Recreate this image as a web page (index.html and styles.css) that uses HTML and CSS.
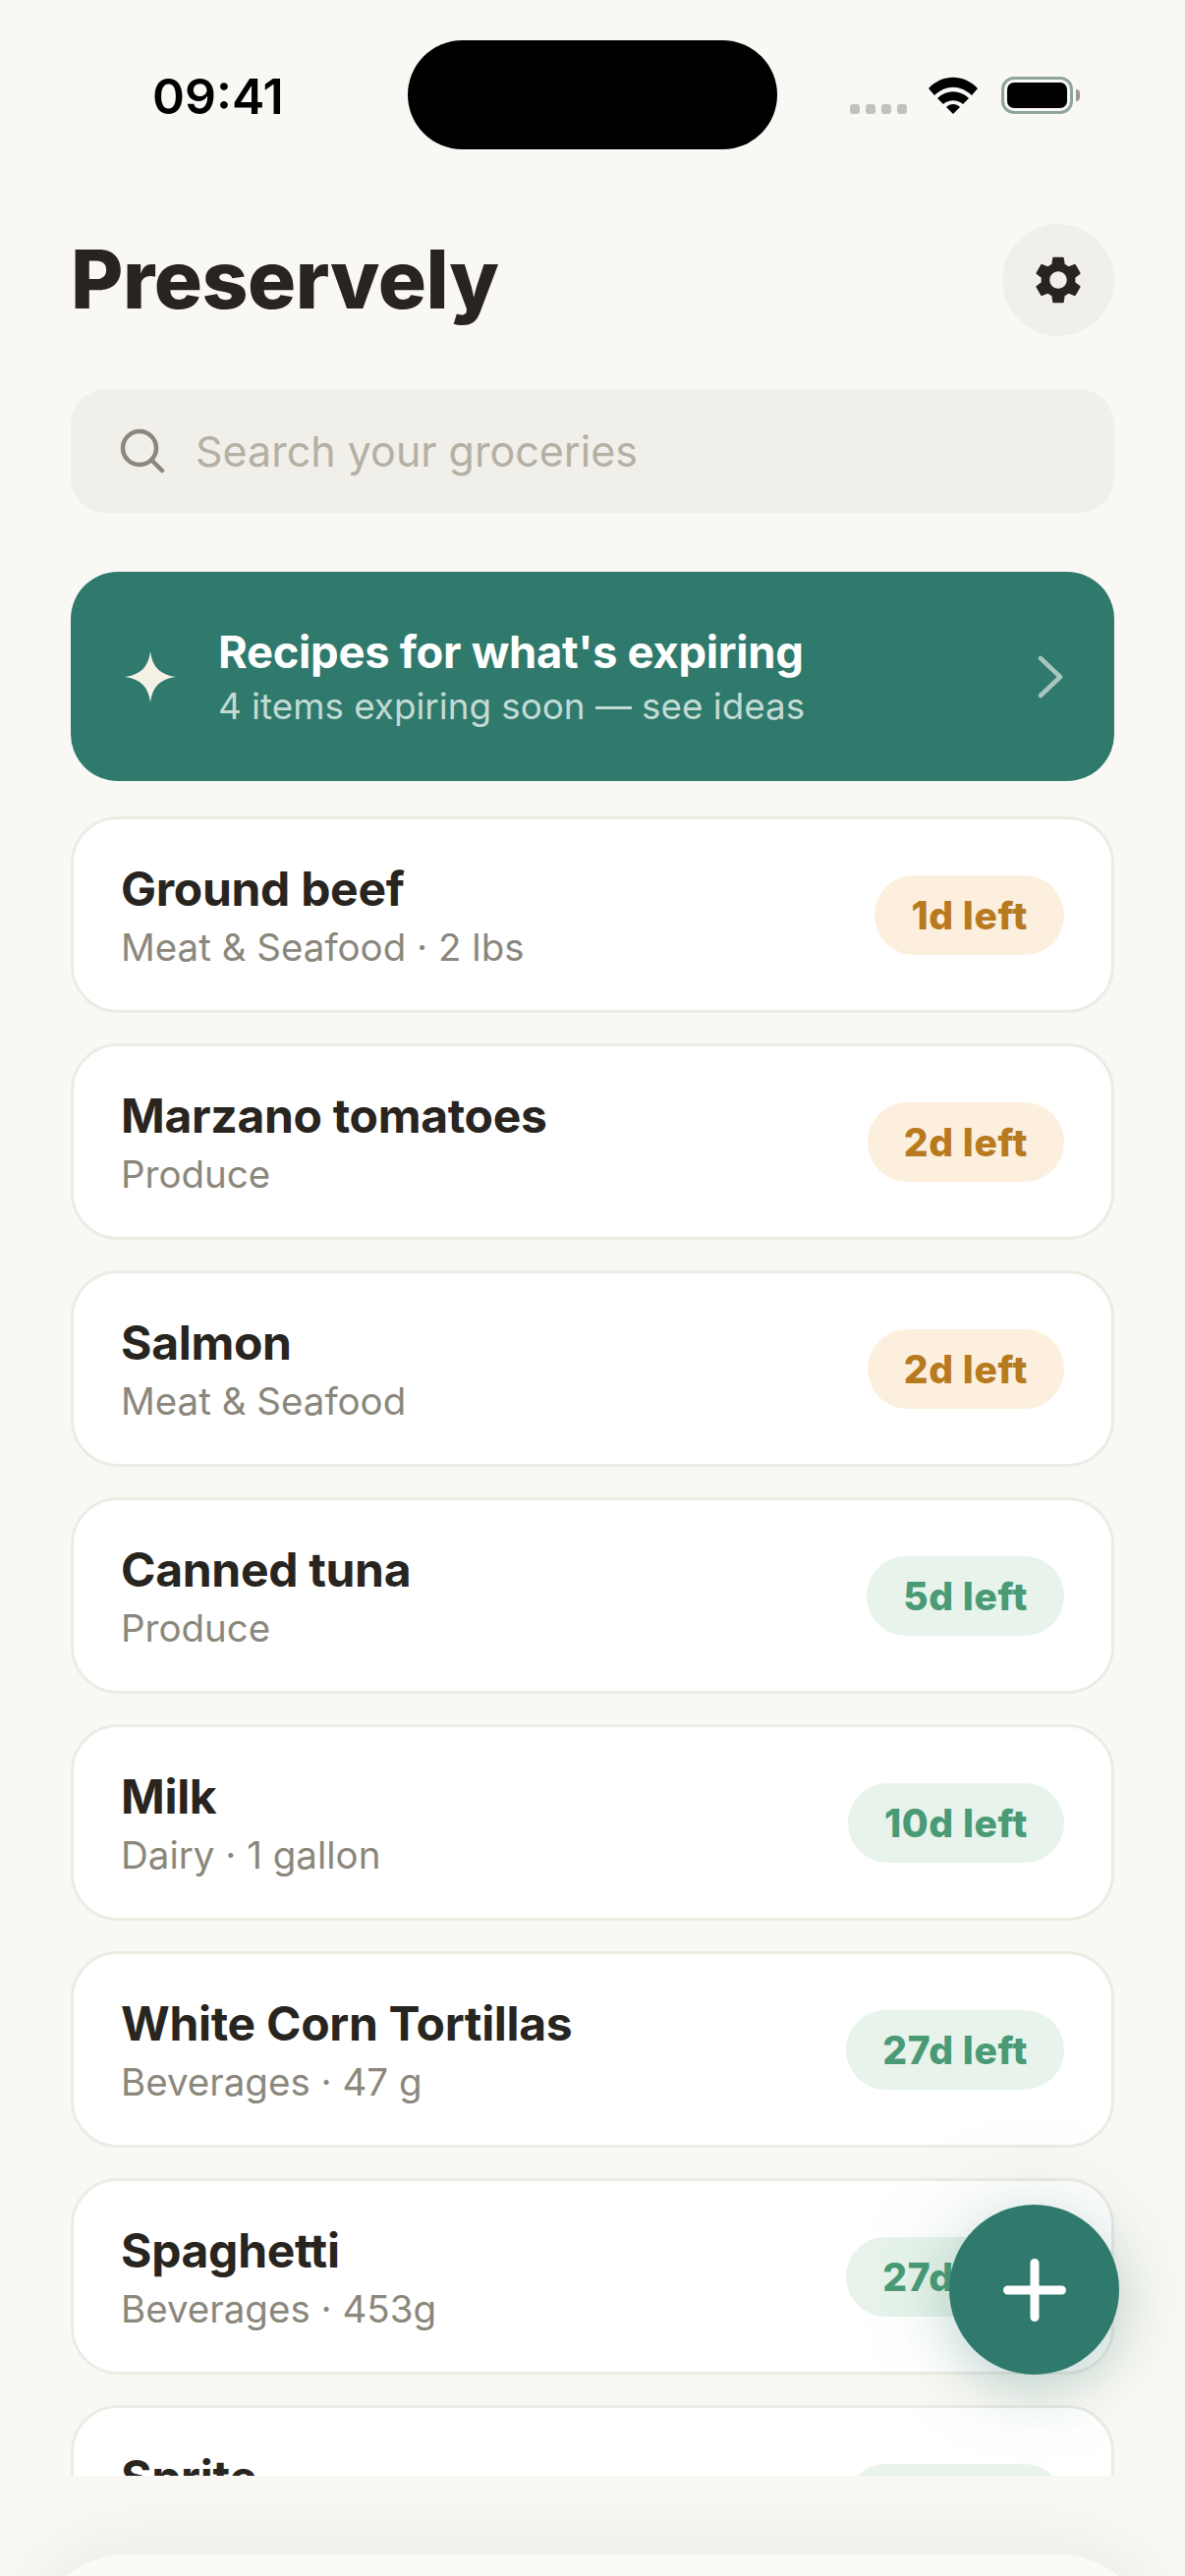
FILE: index.html
```html
<!DOCTYPE html>
<html lang="en">
<head>
  <meta charset="UTF-8">
  <title>Preservely</title>
  <link rel="stylesheet" href="styles.css">
</head>
<body>
  <div class="app">

    <div class="status-bar">
      <span class="time">09:41</span>
      <div class="island"></div>
      <div class="status-icons">
        <div class="signal"><i></i><i></i><i></i><i></i></div>
        <svg class="wifi" viewBox="0 0 50 38">
          <path d="M0 12 C14 -3 36 -3 50 12 L44 19 C32 8 18 8 6 19 Z" fill="#000"/>
          <path d="M9 22 C18 13 32 13 41 22 L35 28 C29 23 21 23 15 28 Z" fill="#000"/>
          <path d="M18 31 C22 27 28 27 32 31 L25 38 Z" fill="#000"/>
        </svg>
        <div class="battery"><div class="battery-level"></div></div>
        <div class="battery-tip"></div>
      </div>
    </div>

    <div class="header">
      <h1>Preservely</h1>
      <div class="settings">
        <svg viewBox="0 0 24 24" width="58" height="58">
          <path fill="#282521" d="M19.14 12.94c.04-.3.06-.61.06-.94 0-.32-.02-.64-.07-.94l2.03-1.58c.18-.14.23-.41.12-.61l-1.92-3.32c-.12-.22-.37-.29-.59-.22l-2.39.96c-.5-.38-1.03-.7-1.62-.94l-.36-2.54c-.04-.24-.24-.41-.48-.41h-3.84c-.24 0-.43.17-.47.41l-.36 2.54c-.59.24-1.13.57-1.62.94l-2.39-.96c-.22-.08-.47 0-.59.22L2.74 8.87c-.12.21-.08.47.12.61l2.03 1.58c-.05.3-.09.63-.09.94s.02.64.07.94l-2.03 1.58c-.18.14-.23.41-.12.61l1.92 3.32c.12.22.37.29.59.22l2.39-.96c.5.38 1.03.7 1.62.94l.36 2.54c.05.24.24.41.48.41h3.84c.24 0 .44-.17.47-.41l.36-2.54c.59-.24 1.13-.56 1.62-.94l2.39.96c.22.08.47 0 .59-.22l1.92-3.32c.12-.22.07-.47-.12-.61l-2.01-1.58zM12 15.6c-1.98 0-3.6-1.62-3.6-3.6s1.62-3.6 3.6-3.6 3.6 1.62 3.6 3.6-1.62 3.6-3.6 3.6z"/>
        </svg>
      </div>
    </div>

    <div class="search">
      <svg viewBox="0 0 46 46" width="46" height="46">
        <circle cx="20" cy="20" r="17" fill="none" stroke="#8b877c" stroke-width="4.5"/>
        <path d="M32.5 32.5 L43 43" stroke="#8b877c" stroke-width="4.5" stroke-linecap="round"/>
      </svg>
      <span>Search your groceries</span>
    </div>

    <div class="banner">
      <svg class="sparkle" viewBox="0 0 52 52" width="52" height="52">
        <path fill="#f6f1e7" d="M26 0 C28 16 36 24 52 26 C36 28 28 36 26 52 C24 36 16 28 0 26 C16 24 24 16 26 0 Z"/>
      </svg>
      <div class="banner-text">
        <div class="banner-title">Recipes for what's expiring</div>
        <div class="banner-sub">4 items expiring soon — see ideas</div>
      </div>
      <svg class="chevron" viewBox="0 0 26 44" width="26" height="44">
        <path d="M3 3 L23 22 L3 41" fill="none" stroke="#a9c6be" stroke-width="4.5" stroke-linecap="round" stroke-linejoin="round"/>
      </svg>
    </div>

    <div class="lista">
      <div class="item">
        <div>
          <div class="item-name">Ground beef</div>
          <div class="item-sub">Meat &amp; Seafood · 2 lbs</div>
        </div>
        <span class="badge soon">1d left</span>
      </div>
      <div class="item">
        <div>
          <div class="item-name">Marzano tomatoes</div>
          <div class="item-sub">Produce</div>
        </div>
        <span class="badge soon">2d left</span>
      </div>
      <div class="item">
        <div>
          <div class="item-name">Salmon</div>
          <div class="item-sub">Meat &amp; Seafood</div>
        </div>
        <span class="badge soon">2d left</span>
      </div>
      <div class="item">
        <div>
          <div class="item-name">Canned tuna</div>
          <div class="item-sub">Produce</div>
        </div>
        <span class="badge fresh">5d left</span>
      </div>
      <div class="item">
        <div>
          <div class="item-name">Milk</div>
          <div class="item-sub">Dairy · 1 gallon</div>
        </div>
        <span class="badge fresh">10d left</span>
      </div>
      <div class="item">
        <div>
          <div class="item-name">White Corn Tortillas</div>
          <div class="item-sub">Beverages · 47 g</div>
        </div>
        <span class="badge fresh">27d left</span>
      </div>
      <div class="item">
        <div>
          <div class="item-name">Spaghetti</div>
          <div class="item-sub">Beverages · 453g</div>
        </div>
        <span class="badge fresh">27d left</span>
      </div>
      <div class="item">
        <div>
          <div class="item-name">Sprite</div>
          <div class="item-sub">Beverages</div>
        </div>
        <span class="badge fresh">27d left</span>
      </div>
    </div>

    <div class="bottom">
      <div class="bottom-sheet"></div>
    </div>

    <div class="fab">
      <svg viewBox="0 0 64 64" width="64" height="64">
        <path d="M32 4.5 V59.5 M4.5 32 H59.5" stroke="#fff" stroke-width="9" stroke-linecap="round"/>
      </svg>
    </div>

  </div>
</body>
</html>
```

FILE: styles.css
```css
* {
  box-sizing: border-box;
}

body {
  margin: 0;
  background-color: #f9f8f4;
  font-family: Inter, sans-serif;
  color: #282521;
}

.app {
  position: relative;
  width: 1206px;
  height: 2622px;
  overflow: hidden;
  display: flex;
  flex-direction: column;
}

/* Status bar */
.status-bar {
  height: 228px;
  flex: none;
  display: flex;
  align-items: flex-start;
  padding: 41px 0 0 155px;
}

.time {
  width: 260px;
  margin-top: 33px;
  font-size: 50px;
  line-height: 49px;
  font-weight: 600;
  color: #000;
}

.island {
  width: 376px;
  height: 111px;
  border-radius: 56px;
  background-color: #000;
}

.status-icons {
  margin: 37px 0 0 74px;
  display: flex;
  align-items: flex-end;
  height: 38px;
}

.signal {
  display: flex;
  gap: 6px;
  margin-right: 22px;
}

.signal i {
  width: 10px;
  height: 10px;
  border-radius: 3px;
  background-color: #c0c3bd;
}

.wifi {
  width: 50px;
  height: 38px;
  margin-right: 24px;
}

.battery {
  width: 73px;
  height: 38px;
  padding: 3px;
  border: 3px solid #8fa59c;
  border-radius: 13px;
}

.battery-level {
  width: 100%;
  height: 100%;
  border-radius: 7px;
  background-color: #000;
}

.battery-tip {
  width: 4px;
  height: 12px;
  margin: 0 0 13px 3px;
  border-radius: 0 4px 4px 0;
  background-color: #9a9a92;
}

/* Header */
.header {
  flex: none;
  display: flex;
  justify-content: space-between;
  align-items: center;
  height: 114px;
  margin: 0 72px;
}

h1 {
  margin: 0 0 2px;
  font-size: 82px;
  font-weight: 800;
  letter-spacing: -0.45px;
}

.settings {
  width: 114px;
  height: 114px;
  border-radius: 50%;
  background-color: #f1efe9;
  display: flex;
  align-items: center;
  justify-content: center;
}

/* Search */
.search {
  flex: none;
  height: 126px;
  margin: 54px 72px 60px;
  padding: 0 50px;
  border-radius: 36px;
  background-color: #f1efe9;
  display: flex;
  align-items: center;
  gap: 31px;
  font-size: 43px;
  color: #b5b0a4;
}

/* Recipes banner */
.banner {
  flex: none;
  height: 213px;
  margin: 0 72px 36px;
  padding: 0 52px 0 55px;
  border-radius: 48px;
  background-color: #2f7a6d;
  display: flex;
  align-items: center;
  gap: 43px;
  color: #fff;
}

.banner-text {
  flex: 1;
}

.banner-title {
  font-size: 45.4px;
  font-weight: 650;
  letter-spacing: -0.3px;
  line-height: 58px;
}

.banner-sub {
  margin-top: 2px;
  font-size: 36.8px;
  line-height: 48px;
  color: #c4dbd4;
}

/* Lista de itens */
.lista {
  flex: 1;
  min-height: 0;
  margin: 0 72px;
  overflow: hidden;
  display: flex;
  flex-direction: column;
  gap: 31px;
}

.item {
  flex: none;
  height: 200px;
  padding: 0 48px;
  background-color: #fff;
  border: 3px solid #ecebe4;
  border-radius: 48px;
  display: flex;
  justify-content: space-between;
  align-items: center;
}

.item-name {
  font-size: 48px;
  line-height: 62px;
  font-weight: 650;
  letter-spacing: -0.3px;
}

.item-sub {
  margin-top: 3px;
  font-size: 38.5px;
  line-height: 50px;
  color: #8b877c;
}

.badge {
  height: 81px;
  padding: 0 37px;
  border-radius: 41px;
  display: flex;
  align-items: center;
  font-size: 39px;
  font-weight: 800;
  letter-spacing: 0.6px;
}

.soon {
  background-color: #fcefdd;
  color: #b87a1e;
}

.fresh {
  background-color: #e7f3eb;
  color: #4a9a75;
}

/* Bottom area */
.bottom {
  flex: none;
  height: 102px;
  padding-top: 80px;
  background-color: #f8f7f3;
}

.bottom-sheet {
  height: 100px;
  margin: 0 30px;
  border-radius: 100px 100px 0 0;
  background-color: #fbfaf7;
  box-shadow: 0 -8px 70px rgba(40, 37, 33, 0.06);
}

.fab {
  position: absolute;
  left: 966px;
  top: 2244px;
  width: 173px;
  height: 173px;
  border-radius: 50%;
  background-color: #2f7a6d;
  box-shadow: 0 16px 48px rgba(47, 122, 109, 0.22), 0 0 110px rgba(47, 122, 109, 0.14);
  display: flex;
  align-items: center;
  justify-content: center;
}
```
